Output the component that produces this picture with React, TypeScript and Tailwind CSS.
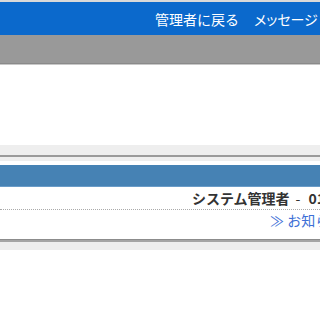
export default function App() {
  const jp = { fontFamily: '"Noto Sans CJK JP", "Noto Sans", sans-serif' };
  return (
    <div className="w-[320px] h-[320px] overflow-hidden bg-white" style={jp}>
      <div className="h-[2px] bg-[#d9d9d9]" />
      <div className="h-[33px] bg-[#0b69cc] flex items-center pl-[155px] gap-[15px] whitespace-nowrap text-white text-[14px] leading-none">
        <span>管理者に戻る</span>
        <span className="[font-feature-settings:'palt']">メッセージ</span>
        <span>ログアウト</span>
      </div>
      <div className="h-[28px] bg-[#999999]" />
      <div className="h-[1px] bg-[#8a8a8a]" />
      <div className="h-[1px] bg-[#c8c8c8]" />
      <div className="h-[80px] bg-white" />
      <div className="h-[10px] bg-[#eeeeee]" />
      <div className="h-[2px] bg-[#9a9a9a]" />
      <div className="h-[4px] bg-[#eeeeee]" />
      <div className="h-[4px] bg-white" />
      <div className="h-[22px] bg-[#4682b4] border-b border-[#6a9cc8]" />
      <div className="h-[22px] flex items-center pl-[192px] whitespace-nowrap text-[14px] font-bold text-[#333333] leading-none">
        システム管理者<span className="font-normal ml-[6px] mr-[8px]">-</span>01/01 12:00
      </div>
      <div className="border-b border-dotted border-[#aaaaaa]" />
      <div className="h-[29px] flex items-start pt-[1px] pl-[270px] whitespace-nowrap text-[14px] text-[#3d6fd6] leading-[18px]">
        ≫ お知らせ一覧
      </div>
      <div className="h-[1px] bg-[#8c8c8c]" />
      <div className="h-[2px] bg-[#a5a5a5]" />
      <div className="h-[8px] bg-[#eeeeee]" />
      <div className="flex-1 bg-white" />
    </div>
  );
}
